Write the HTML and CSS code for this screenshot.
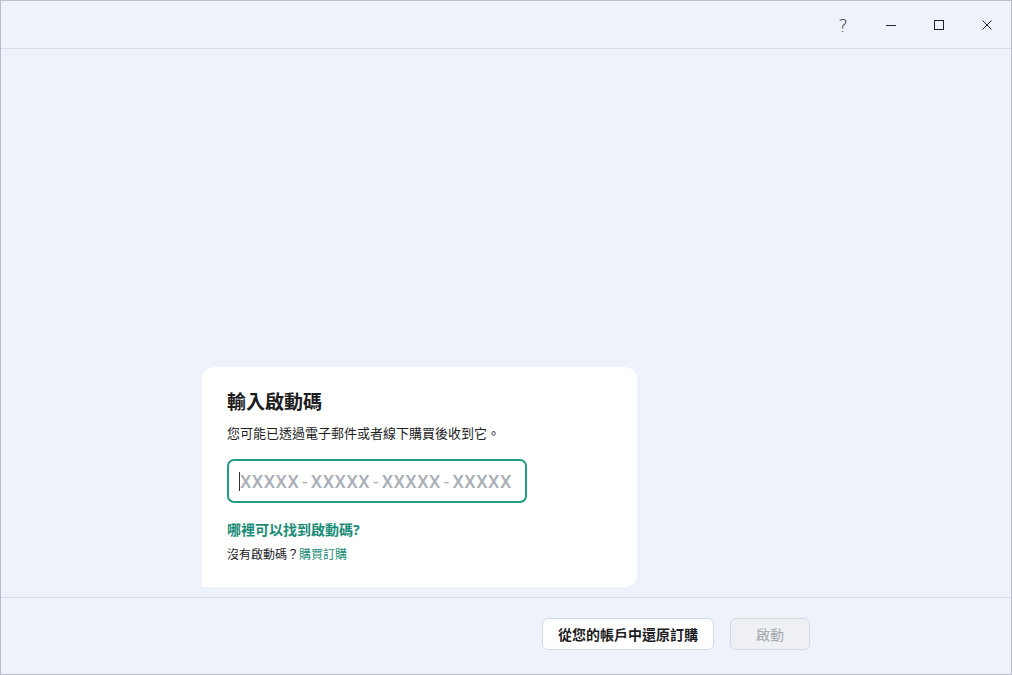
FILE: index.html
```html
<!DOCTYPE html>
<html lang="zh-Hant">
<head>
    <meta charset="UTF-8">
    <title>輸入啟動碼</title>
    <link rel="stylesheet" href="styles.css">
</head>
<body>
    <div class="window">
        <div class="titlebar">
            <button class="tb-btn tb-help" title="說明">?</button>
            <button class="tb-btn" title="最小化">
                <svg width="12" height="12" viewBox="0 0 12 12"><path d="M1 6.5h10" stroke="#222" stroke-width="1"/></svg>
            </button>
            <button class="tb-btn" title="最大化">
                <svg width="12" height="12" viewBox="0 0 12 12"><rect x="1.5" y="1.5" width="9" height="9" fill="none" stroke="#222" stroke-width="1"/></svg>
            </button>
            <button class="tb-btn" title="關閉">
                <svg width="12" height="12" viewBox="0 0 12 12"><path d="M1.5 1.5l9 9M10.5 1.5l-9 9" stroke="#222" stroke-width="1"/></svg>
            </button>
        </div>

        <div class="main">
            <div class="card">
                <h1 class="card-title">輸入啟動碼</h1>
                <p class="card-desc">您可能已透過電子郵件或者線下購買後收到它。</p>
                <div class="code-input">
                    <span class="caret"></span>
                    <span class="placeholder">XXXXX<span class="dash">-</span>XXXXX<span class="dash">-</span>XXXXX<span class="dash">-</span>XXXXX</span>
                </div>
                <a class="link-find" href="#">哪裡可以找到啟動碼?</a>
                <p class="no-code">沒有啟動碼？<a href="#">購買訂購</a></p>
            </div>
        </div>

        <div class="footer">
            <button class="btn btn-restore">從您的帳戶中還原訂購</button>
            <button class="btn btn-activate" disabled>啟動</button>
        </div>
    </div>
</body>
</html>
```

FILE: styles.css
```css
body {
    margin: 0;
    background: #eef2fa;
    font-family: "Noto Sans", "Noto Sans CJK TC", sans-serif;
    color: #1d1d1f;
}
.window {
    width: 1012px;
    height: 675px;
    box-sizing: border-box;
    border: 1px solid #b9bec8;
    background: #eef2fa;
    display: flex;
    flex-direction: column;
}
.titlebar {
    height: 47px;
    border-bottom: 1px solid #d8dfeb;
    display: flex;
    justify-content: flex-end;
    align-items: center;
}
.tb-btn {
    width: 48px;
    height: 47px;
    background: none;
    border: none;
    padding: 0;
    display: flex;
    align-items: center;
    justify-content: center;
    cursor: pointer;
}
.tb-help {
    font-family: "DejaVu Sans", sans-serif;
    font-size: 18px;
    font-weight: 300;
    color: #333;
    padding-top: 2px;
}
.main {
    flex: 1;
    display: flex;
    align-items: flex-end;
    padding: 0 0 10px 201px;
    border-bottom: 1px solid #d8dfeb;
}
.card {
    width: 435px;
    height: 220px;
    box-sizing: border-box;
    background: #fff;
    border-radius: 12px 12px 12px 0;
    padding: 22px 25px 0 25px;
}
.card-title {
    margin: 0;
    font-size: 19px;
    font-weight: bold;
    line-height: 27px;
    color: #1d1d1f;
}
.card-desc {
    margin: 8px 0 0 0;
    font-size: 13px;
    line-height: 18px;
    color: #1d1d1f;
}
.code-input {
    margin-top: 17px;
    width: 300px;
    height: 44px;
    box-sizing: border-box;
    border: 2px solid #1f9d85;
    border-radius: 7px;
    display: flex;
    align-items: center;
    padding-left: 10px;
    white-space: nowrap;
    overflow: hidden;
}
.caret {
    width: 1px;
    height: 19px;
    background: #333;
    flex: none;
}
.placeholder {
    font-family: "Roboto", "Noto Sans", sans-serif;
    font-size: 18px;
    font-weight: 500;
    color: #aab0b7;
    letter-spacing: 0.5px;
}
.dash {
    margin: 0 3px;
    font-weight: 400;
}
.link-find {
    display: block;
    margin-top: 17px;
    font-size: 14px;
    font-weight: bold;
    line-height: 20px;
    color: #1a8c76;
    text-decoration: none;
}
.no-code {
    margin: 6px 0 0 0;
    font-size: 12px;
    line-height: 18px;
    color: #1d1d1f;
}
.no-code a {
    color: #1a8c76;
    text-decoration: none;
}
.footer {
    height: 76px;
    display: flex;
    justify-content: flex-end;
    align-items: center;
    gap: 16px;
    padding-right: 201px;
    padding-bottom: 4px;
    box-sizing: border-box;
}
.btn {
    height: 32px;
    border-radius: 6px;
    font-family: "Noto Sans", "Noto Sans CJK TC", sans-serif;
    font-size: 14px;
    font-weight: bold;
    cursor: pointer;
}
.btn-restore {
    width: 172px;
    background: #fff;
    border: 1px solid #d5d9e0;
    color: #1d1d1f;
}
.btn-activate {
    width: 80px;
    background: #eef0f3;
    border: 1px solid #d5d9e0;
    color: #a3a8ae;
    font-weight: normal;
    cursor: default;
}
```
